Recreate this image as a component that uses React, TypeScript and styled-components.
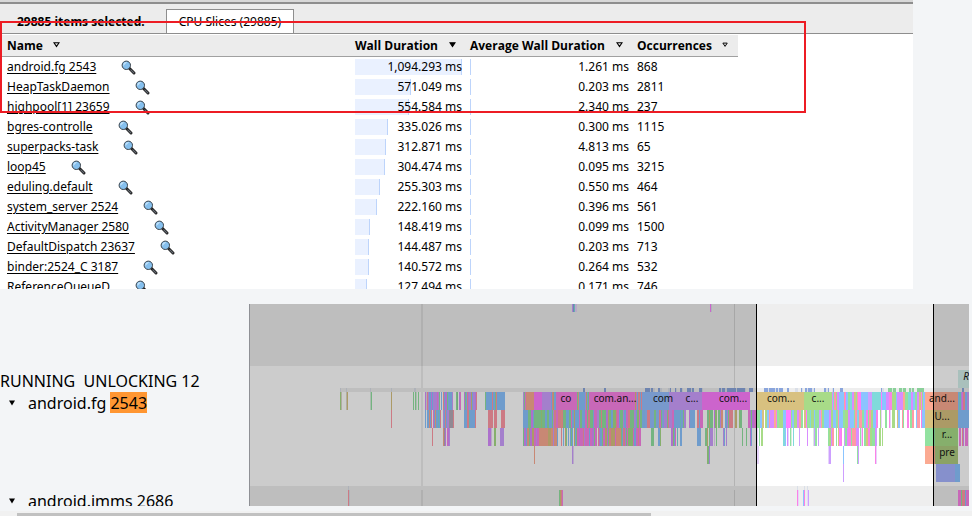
import React from "react";
import styled, { createGlobalStyle } from "styled-components";

const GlobalStyle = createGlobalStyle`
  * { box-sizing: border-box; }
  body { margin: 0; background: #f3f5f7; color: #000; font-family: "Segoe UI", "Noto Sans", sans-serif; }
`;

const Page = styled.main`
  position: relative;
  display: flex;
  flex-direction: column;
  height: 100vh;
  overflow: hidden;
`;

const Analysis = styled.section`
  flex: 0 0 289px;
  margin-right: 59px;
  overflow: hidden;
  background: #fff;
  border-top: 2px solid #d8d8d8;
`;

const TabBar = styled.div`
  display: flex;
  align-items: flex-end;
  gap: 21px;
  height: 32px;
  padding-left: 17px;
  background: #ececec;
  border-top: 2px solid #8e8e8e;
  border-bottom: 1px solid #8e8e8e;
  font-size: 12px;
  line-height: 24px;
`;

const Summary = styled.strong`
  line-height: 23px;
`;

const Tab = styled.button`
  height: 24px;
  padding: 0 12px;
  border: 1px solid #8e8e8e;
  border-bottom: 0;
  background: #fff;
  color: #000;
  font: inherit;
  line-height: 23px;
`;

const Table = styled.table`
  width: 738px;
  margin-top: 1px;
  border-collapse: collapse;
  table-layout: fixed;
  font-size: 12px;
  line-height: 20px;
`;

const HeadCell = styled.th<{ $width: number }>`
  width: ${(p) => p.$width}px;
  height: 21px;
  padding: 0 4px;
  background: #ececec;
  border-bottom: 1px solid #a0a0a0;
  font-family: "Segoe UI", "Open Sans", sans-serif;
  text-align: left;
  white-space: nowrap;
  &:first-child { padding-left: 7px; }
`;

const HeadContent = styled.span<{ $spread: boolean }>`
  display: flex;
  align-items: center;
  justify-content: ${(p) => (p.$spread ? "space-between" : "flex-start")};
  gap: 10px;
  padding-top: 1px;
  padding-right: ${(p) => (p.$spread ? 6 : 0)}px;
  & > svg { margin-bottom: 3px; }
`;

const Cell = styled.td`
  height: 20px;
  padding: 0 4px;
  white-space: nowrap;
  &:first-child { padding-left: 7px; }
`;

const NameContent = styled.span`
  display: flex;
  align-items: center;
  gap: 25px;
`;

const NameLink = styled.a`
  color: #000;
  text-decoration: underline;
  text-underline-offset: 2px;
`;

const SearchButton = styled.button`
  display: flex;
  padding: 0;
  border: 0;
  background: none;
`;

const Meter = styled.span`
  display: grid;
  align-items: center;
  height: 20px;
  & > * { grid-area: 1 / 1; }
`;

const MeterFill = styled.span`
  min-width: 1px;
  height: 16px;
  background: #eaf1ff;
  border-right: 1px solid #bdd4fb;
`;

const MeterText = styled.span`
  text-align: right;
`;

const Annotation = styled.div`
  position: absolute;
  top: 21px;
  left: 0;
  width: 806px;
  height: 92px;
  border: 2px solid #ed1c24;
`;

const Timeline = styled.section`
  display: grid;
  grid-template-columns: 249px minmax(0, 1fr);
  flex: 0 0 202px;
  margin: 15px 3px 0 0;
  overflow: hidden;
`;

const Labels = styled.div`
  padding-top: 66px;
  overflow: hidden;
  font-size: 16px;
  line-height: 22px;
  white-space: pre;
`;

const ProcessLabel = styled.div`
  height: 22px;
`;

const ThreadLabel = styled.div<{ $height: number }>`
  display: flex;
  align-items: flex-start;
  height: ${(p) => p.$height}px;
`;

const Toggle = styled.button`
  display: flex;
  align-items: center;
  width: 28px;
  height: 22px;
  padding: 0 0 0 9px;
  border: 0;
  background: none;
`;

const Highlight = styled.mark`
  height: 21px;
  background: #ff9632;
  color: #000;
`;

const Chart = styled.svg`
  display: block;
  width: 100%;
  height: 202px;
  border-left: 1px solid #8e9095;
  background: #fff;
`;

const Scrollbar = styled.div`
  flex: 1;
  margin-top: 5px;
  padding: 2px 321px 0 17px;
  background: #f1f1f1;
`;

const Thumb = styled.div`
  height: 100%;
  background: #c1c1c1;
`;

type Entry = { name: string; wall: number; avg: string; count: number };

const entries: Entry[] = [
  { name: "android.fg 2543", wall: 1094.293, avg: "1.261", count: 868 },
  { name: "HeapTaskDaemon", wall: 571.049, avg: "0.203", count: 2811 },
  { name: "highpool[1] 23659", wall: 554.584, avg: "2.340", count: 237 },
  { name: "bgres-controlle", wall: 335.026, avg: "0.300", count: 1115 },
  { name: "superpacks-task", wall: 312.871, avg: "4.813", count: 65 },
  { name: "loop45", wall: 304.474, avg: "0.095", count: 3215 },
  { name: "eduling.default", wall: 255.303, avg: "0.550", count: 464 },
  { name: "system_server 2524", wall: 222.16, avg: "0.396", count: 561 },
  { name: "ActivityManager 2580", wall: 148.419, avg: "0.099", count: 1500 },
  { name: "DefaultDispatch 23637", wall: 144.487, avg: "0.203", count: 713 },
  { name: "binder:2524_C 3187", wall: 140.572, avg: "0.264", count: 532 },
  { name: "ReferenceQueueD", wall: 127.494, avg: "0.171", count: 746 },
];

const columns = [
  { title: "Name", width: 351, sorted: false, spread: false },
  { title: "Wall Duration", width: 115, sorted: true, spread: true },
  { title: "Average Wall Duration", width: 167, sorted: false, spread: true },
  { title: "Occurrences", width: 105, sorted: false, spread: true },
];

const formatMs = (value: number) =>
  value.toLocaleString("en-US", { minimumFractionDigits: 3, maximumFractionDigits: 3 });

function SortArrow({ filled }: { filled: boolean }) {
  return (
    <svg width="7" height="6" viewBox="0 0 7 6" aria-hidden="true">
      <path d="M1 .8h5L3.5 4.6Z" fill={filled ? "#000" : "#ddd"} stroke="#000" strokeWidth="1.1" />
    </svg>
  );
}

function Magnifier() {
  return (
    <svg width="15" height="15" viewBox="0 0 15 15" aria-hidden="true">
      <path d="m8.3 8.3 4.7 4.7" stroke="#1c1c1c" strokeWidth="2.9" strokeLinecap="round" />
      <path d="m9.8 9.8 3.1 3.1" stroke="#697078" strokeWidth="1.2" strokeLinecap="round" />
      <circle cx="5.3" cy="5.3" r="4.2" fill="#86c0ee" stroke="#3a4249" strokeWidth="1" />
      <path d="M2.3 5.9A3.2 3.2 0 0 1 6.1 2.2Z" fill="#c4e2f9" />
    </svg>
  );
}

const palette: Record<string, string> = {
  p: "#cd9fff", b: "#8bc4ff", c: "#96c0ff", m: "#ff7dff", k: "#fb82e6",
  g: "#92e2a0", n: "#a8db88", o: "#fbaa92", r: "#ff99a6", l: "#d8c180",
  t: "#80dadb", v: "#d98cff", s: "#8aa5dc", e: "#dadfe8", f: "#dcd8c8",
  h: "#a8b4ff", u: "#d6ecdd", w: "#e6d4fb", y: "#8bd09a", x: "#b5acb8",
  a: "#aecb80",
};

type Band = { y: number; height: number; start: number; runs: string };

/* Each run is a colour key and a length in pixels; "-" leaves a gap. */
const bands: Band[] = [
  { y: 0, height: 8, start: 322, runs: "p1 s1 t1 w2 -133 m1 e1" },
  { y: 84, height: 4, start: 90, runs: "e1 -5 e1 -23 e1 -20 e1 -22 e1 e1 -167 s2 -19 s2 -39 s5 e1 s2 e2 -3 s2 e2 -6 e2 s1 -4 s1 e1 -3 s2 e1 -4 s4 e1 s2 -5 s3 e1 -16 s2 e1 s3 e2 s9 e1 s8 e1 -3 s4 -11 s4 e1 s6 e1 s2 e1 s4 -4 s2 -6 e3 -3 s1 e1 -2 s2 e1 s4 e2 s1 -9 s2 e2 s1 -3 e1 s1 -6 s3 -38 s1 e2 -4 y4 u1 y3 -3 y3 u1 y3 -3 y2 e1 y2 -3 y7 -38 s2" },
  { y: 88, height: 18, start: 90, runs: "n1 f1 -4 f1 l1 -22 u1 g1 -19 l1 -21 g1 -1 g1 u1 -1 g1" },
  { y: 88, height: 18, start: 175, runs: "v1 e1 r1 p1 b2 v1 b1 p4 k1 p1 g1 -1 b1 -1 r1 b1 v2 g1 b4 p1 -3 g1 y1 -1 v1 k1 -3 v1 g1 b1 r1 v1 p2 l1 b1 p2 v1 r1 -8 g1 b6 r1 b2 g1 r1 b8" },
  { y: 88, height: 18, start: 273, runs: "p1 g1 k1 o8 m8 p9 b1 r1 l1 b2 k21 g1 o1 b6 p1 l1 b1 g1 k46 l1 k1 b1 r2 b1 r1 c27 p33 m48" },
  { y: 88, height: 18, start: 507, runs: "l47 n28 v1 t1 r2 n1 v2 b5 r1 k1 b2 g2 t2 v2 l2 g1 r1 m3 b7 p4 t9 m1 b4 v3 k3 n4 b1 v6 o2 g3 t3 v2 b2 g2 v2 l2 k1 n1 b2" },
  { y: 88, height: 18, start: 675, runs: "o33 b1 t2 p1 m1 r2 b2 p2" },
  { y: 106, height: 18, start: 141, runs: "r1 -33 b1 -1 b2 o1 b1 r1 -1 k1 b1 o1 b2 t1 b1 r1 -2 p1 b1 r1 b1 p2 x4 r1 -10 b3 r2 t1 b5 r1 -12 r5 -1 r3 -4 r4" },
  { y: 106, height: 18, start: 273, runs: "b5 g3 v2 b1 g7 n1 g3 b2 g2 b3 g1 p1 r2 k2 r3 o1 r1 g3 b3 g2 k1 b2 l1 b4 k1 g2 b3 k2 g1 r2 g3 b1 k3 p2 g2 r1 g4 v2 l1 g2 b2 n3 r1 k2 b1 g3 p1 b2 k2 r2 g4 p2 b1 n2 k1 g2 b3 c2 r3 c4 g2 c3 r1 k1 g1 c2 p3 g1 r1 p3 k2 b6 t1 b2 g1 p2 -3 v1 b5 -2 r2 b1 k3 -4 g2 l1 g3 -1 v1 n2 -1 g2 p1 o2 -2 b2 p1 g1 r4 -2 l2 -2 n1 g2 -6 k2 p1 g1 v2 k2 g2 r1 n3" },
  { y: 106, height: 18, start: 507, runs: "g3 b2 l2 -1 n2 b2 r1 v4 o2 k1 g2 n4 b3 m5 g1 b2 n3 v2 r2 g2 -1 l2 m1 g3 t1 n3 b1 g4 p2 o1 g2 b5 v2 n2 b3 g2 r1 b4 g2 n3 v2 b4 g1 r2 b1 t1 r3 g2 b2 k2 g1 r2 n2 b3 k2 -2 n1 w1 -3 g2 -2 k1 w1 -1 n3 -2 l1 b2 -2 r1 g1 -3 k2 -1 g2 r2 -2 b1 r3 -1 k1 b3" },
  { y: 106, height: 18, start: 675, runs: "l33 b11 k1" },
  { y: 124, height: 18, start: 182, runs: "r1 -10 o1 x1 v1 -1 k1 v1 p1 -38 v3 w1 -2 n2 -4 p4" },
  { y: 124, height: 18, start: 273, runs: "g1 v2 b1 o2 g1 v2 l2 k2 p1 k2 o9 l3 o2 p1 o3 b1 -3 r1 -1 b1 -1 l1 g1 -1 b1 -1 b1 g1 b1 -1 l1 b1 g1 k2 v1 k3 r1 p1 k4 b1 k2 v2 g1 k2 -1 r1 v1 b2 g1 k2 l2 v1 g1 r2 l4 k1 o5 g1 b1 r2 v1 g1 k1 n5 k1 b2 k2 r1 k2" },
  { y: 124, height: 18, start: 401, runs: "g3 -4 b2 n1 -10 v2 n1 b1 k1 -1 t1 -2 b2 -15 b4 -4 g2 l1 -1 g1 p3 -1 w1 -1 g1 -6 p1 b1 -1 p1 -15 g1 -3 g1 -3 v1 b1" },
  { y: 124, height: 18, start: 507, runs: "w1 -1 g1 -1 n2 -20 t2 b1 -1 v1 w1 -1 g1 u1 -1 t1 -5 p1 -7 v1 -5 u1 p1 g2 -1 p1 -9 g1 n2 v1 r2 -2 g1 -1 l1 m2 k1 -2 p1 g2 v1 k3 g1 r4 v3 -1 g1 w1 k1 -1 g2 l2 k2 n2 g3 v1 p1 -2 n2 -1 n1" },
  { y: 124, height: 18, start: 675, runs: "g10 n23 -1 k2 -1 r1 v1 -1 k3" },
  { y: 142, height: 18, start: 284, runs: "o1 -37 p1 w1 -133 n1 g1 p1 -47 w2 -69 w1 p2 -12 b1 -13 g1 p1 -16 k1 w1 -48 o10 a23" },
  { y: 160, height: 18, start: 593, runs: "p1 -92 h19 b5" },
  { y: 182, height: 4, start: 98, runs: "e1 -448 e1 -6 e1 -2 e1" },
  { y: 186, height: 16, start: 98, runs: "r1 e1 -209 g1 l1 r1 k1 -234 k1 w1 -4 b1 k1 -2 w1 p1 -149 k3 g1 r3 b1 k3" },
];

function SliceBand({ band }: { band: Band }) {
  let x = band.start;
  return (
    <g>
      {band.runs.split(" ").map((run, i) => {
        const width = Number(run.slice(1));
        const left = x;
        x += width;
        return run[0] === "-" ? null : (
          <rect key={i} x={left} y={band.y} width={width} height={band.height} fill={palette[run[0]]} />
        );
      })}
    </g>
  );
}

const sliceLabels = [
  { x: 316, y: 98, text: "co" },
  { x: 365, y: 98, text: "com.an..." },
  { x: 413, y: 98, text: "com" },
  { x: 442, y: 98, text: "c..." },
  { x: 483, y: 98, text: "com..." },
  { x: 531, y: 98, text: "com..." },
  { x: 568, y: 98, text: "c..." },
  { x: 692, y: 98, text: "and..." },
  { x: 692, y: 116, text: "U..." },
  { x: 697, y: 134, text: "r..." },
  { x: 697, y: 152, text: "pre" },
];

function TraceChart() {
  return (
    <Chart role="img" aria-label="Thread slices" shapeRendering="crispEdges">
      <rect width="100%" height="62" fill="#eee" />
      <rect x="90" y="84" width="100%" height="4" fill="#eee" />
      <rect y="182" width="100%" height="20" fill="#eee" />
      <path d="M172 0v84M172 88v94M172 186v16" stroke="#000" strokeOpacity=".07" strokeWidth="2" />
      <path d="M484.5 0v84M484.5 88v94M484.5 186v16" stroke="#000" strokeOpacity=".12" />
      <rect x="708" y="66" width="20" height="18" fill="#d4f1eb" />
      {bands.map((band, i) => <SliceBand key={i} band={band} />)}
      <rect width="507" height="202" fill="#000" fillOpacity=".2" />
      <rect x="684" width="100%" height="202" fill="#000" fillOpacity=".2" />
      <path d="M506.5 0v202M683.5 0v202" stroke="#000" />
      <g fontSize="10" fill="#111" textAnchor="middle">
        {sliceLabels.map((label, i) => <text key={i} x={label.x} y={label.y}>{label.text}</text>)}
        <text x="716" y="76" fontStyle="italic">R</text>
      </g>
    </Chart>
  );
}

function ToggleArrow() {
  return (
    <svg width="6" height="6" viewBox="0 0 6 6" aria-hidden="true">
      <path d="M0 .5h6L3 5.5Z" />
    </svg>
  );
}

export default function App() {
  const longest = entries[0].wall;
  return (
    <>
      <GlobalStyle />
      <Page>
        <Analysis>
          <TabBar>
            <Summary>29885 items selected.</Summary>
            <Tab type="button">CPU Slices (29885)</Tab>
          </TabBar>
          <Table>
            <thead>
              <tr>
                {columns.map((column) => (
                  <HeadCell key={column.title} $width={column.width} scope="col">
                    <HeadContent $spread={column.spread}>
                      {column.title}
                      <SortArrow filled={column.sorted} />
                    </HeadContent>
                  </HeadCell>
                ))}
              </tr>
            </thead>
            <tbody>
              {entries.map((entry) => (
                <tr key={entry.name}>
                  <Cell>
                    <NameContent>
                      <NameLink href="#slices">{entry.name}</NameLink>
                      <SearchButton type="button" aria-label={`Find ${entry.name}`}>
                        <Magnifier />
                      </SearchButton>
                    </NameContent>
                  </Cell>
                  <Cell>
                    <Meter>
                      <MeterFill style={{ width: `${(entry.wall / longest) * 100}%` }} />
                      <MeterText>{formatMs(entry.wall)} ms</MeterText>
                    </Meter>
                  </Cell>
                  <Cell>
                    <Meter>
                      <MeterFill style={{ width: `${(Number(entry.avg) / longest) * 100}%` }} />
                      <MeterText>{entry.avg} ms</MeterText>
                    </Meter>
                  </Cell>
                  <Cell>{entry.count}</Cell>
                </tr>
              ))}
            </tbody>
          </Table>
        </Analysis>
        <Timeline id="slices">
          <Labels>
            <ProcessLabel>RUNNING  UNLOCKING 12</ProcessLabel>
            <ThreadLabel $height={98}>
              <Toggle type="button" aria-label="Collapse android.fg"><ToggleArrow /></Toggle>
              android.fg <Highlight>2543</Highlight>
            </ThreadLabel>
            <ThreadLabel $height={22}>
              <Toggle type="button" aria-label="Collapse android.imms"><ToggleArrow /></Toggle>
              android.imms 2686
            </ThreadLabel>
          </Labels>
          <TraceChart />
        </Timeline>
        <Scrollbar><Thumb /></Scrollbar>
        <Annotation />
      </Page>
    </>
  );
}
